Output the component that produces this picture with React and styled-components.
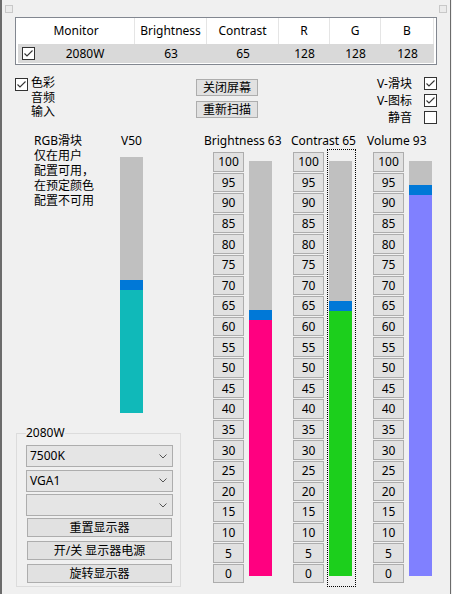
import React from "react";
import styled, { createGlobalStyle } from "styled-components";

const GlobalStyle = createGlobalStyle`
  html, body {
    margin: 0;
    padding: 0;
    background: #f0f0f0;
  }
  body {
    font-family: "Noto Sans", "Noto Sans CJK SC", sans-serif;
    font-size: 12px;
    color: #000;
  }
`;

const Window = styled.div`
  width: 451px;
  height: 594px;
  box-sizing: border-box;
  border-left: 2px solid #6b6b6b;
  border-right: 1px solid #6b6b6b;
  background: #f0f0f0;
  display: flex;
  flex-direction: column;
  overflow: hidden;
`;

const TitleStrip = styled.div`
  height: 17px;
  box-sizing: border-box;
  padding: 5px 3px 0 3px;
  display: flex;
  justify-content: space-between;
  align-items: flex-start;
`;

const TinyBox = styled.div`
  width: 8px;
  height: 8px;
  box-sizing: border-box;
  border: 1px solid #c8c8c8;
  background: #ebebeb;
`;

const Table = styled.div`
  margin: 0 13px;
  height: 48px;
  box-sizing: border-box;
  border: 1px solid #828790;
  background: #fff;
  padding: 0 2px 1px 2px;
`;

const Row = styled.div`
  display: grid;
  grid-template-columns: 117px 72px 72px 51px 51px 53px;
  height: ${(p) => (p.$header ? 26 : 19)}px;
  line-height: ${(p) => (p.$header ? 26 : 19)}px;
  background: ${(p) => (p.$selected ? "#d9d9d9" : "#fff")};
`;

const Cell = styled.div`
  text-align: center;
  white-space: nowrap;
  border-right: ${(p) => (p.$header ? "1px solid #e5e5e5" : "none")};
`;

const MonitorCell = styled.div`
  display: flex;
  align-items: center;
  padding-left: 4px;
  span {
    flex: 1;
    text-align: center;
  }
`;

const Box = styled.div`
  width: 13px;
  height: 13px;
  box-sizing: border-box;
  border: 1px solid #333;
  background: #fff;
  flex-shrink: 0;
  display: flex;
  align-items: center;
  justify-content: center;
`;

function CheckBox({ checked }) {
  return (
    <Box>
      {checked && (
        <svg width="11" height="11" viewBox="0 0 11 11">
          <path d="M1.5 5.5 L4 8 L9.5 2.5" fill="none" stroke="#333" strokeWidth="1.1" />
        </svg>
      )}
    </Box>
  );
}

const ControlsRow = styled.div`
  margin-top: 12px;
  height: 47px;
  display: flex;
  padding: 0 13px;
`;

const LeftControls = styled.div`
  width: 181px;
  display: flex;
  align-items: flex-start;
  gap: 3px;
  padding-top: 1px;
`;

const OptionList = styled.div`
  line-height: 14.5px;
  margin-top: -2px;
`;

const MiddleControls = styled.div`
  display: flex;
  flex-direction: column;
  gap: 5px;
  padding-top: 2px;
`;

const Button = styled.button`
  width: ${(p) => p.$width}px;
  height: ${(p) => p.$height}px;
  margin: 0;
  padding: 0;
  box-sizing: border-box;
  border: 1px solid #adadad;
  background: #e1e1e1;
  font: inherit;
  color: #000;
  line-height: ${(p) => p.$height - 2}px;
  text-align: center;
  white-space: nowrap;
`;

const RightControls = styled.div`
  margin-left: auto;
  display: flex;
  flex-direction: column;
  align-items: flex-end;
  gap: 4px;
`;

const ToggleRow = styled.div`
  display: flex;
  align-items: center;
  gap: 12px;
  height: 13px;
  line-height: 13px;
`;

const MainArea = styled.div`
  margin-top: 8px;
  display: flex;
  gap: 17px;
`;

const LeftPane = styled.div`
  width: 194px;
  display: flex;
  flex-direction: column;
`;

const TopSection = styled.div`
  height: 301px;
  display: flex;
`;

const Note = styled.div`
  margin-left: 32px;
  width: 86px;
  line-height: 15px;
  padding-top: 1px;
`;

const VCol = styled.div`
  width: 23px;
  display: flex;
  flex-direction: column;
  align-items: center;
`;

const ColLabel = styled.div`
  height: 17px;
  line-height: 17px;
  white-space: nowrap;
  margin-left: ${(p) => p.$shift || 0}px;
`;

const Bar = styled.div`
  width: 23px;
  height: ${(p) => p.$height}px;
  margin-top: ${(p) => p.$top || 0}px;
  background: #c0c0c0;
  display: flex;
  flex-direction: column;
  flex-shrink: 0;
`;

const Thumb = styled.div`
  height: 10px;
  background: #0078d7;
  flex-shrink: 0;
`;

const Fill = styled.div`
  flex: 1;
  background: ${(p) => p.$color};
`;

function LevelBar({ value, height, color, top }) {
  const gap = (1 - value / 100) * height - 5;
  return (
    <Bar $height={height} $top={top}>
      <div style={{ height: gap, flexShrink: 0 }} />
      <Thumb />
      <Fill $color={color} />
    </Bar>
  );
}

const Group = styled.div`
  position: relative;
  margin-left: 14px;
  width: 165px;
  height: 154px;
  box-sizing: border-box;
  border: 1px solid #dcdcdc;
  padding: 11px 7px 0 9px;
  display: flex;
  flex-direction: column;
`;

const Legend = styled.span`
  position: absolute;
  top: -8px;
  left: 9px;
  line-height: 14px;
  background: #f0f0f0;
`;

const ComboStack = styled.div`
  display: flex;
  flex-direction: column;
  gap: 2.5px;
`;

const Combo = styled.div`
  height: 22px;
  box-sizing: border-box;
  border: 1px solid #adadad;
  background: #e5e5e5;
  display: flex;
  align-items: center;
  justify-content: space-between;
  padding: 0 5px 0 3px;
  line-height: 20px;
`;

const GroupButtons = styled.div`
  margin-top: 2px;
  margin-left: 1px;
  display: flex;
  flex-direction: column;
  gap: 4px;
`;

const SliderColumn = styled.div`
  width: 63px;
  display: flex;
  flex-direction: column;
`;

const ColBody = styled.div`
  display: flex;
  gap: 3px;
  align-items: flex-start;
`;

const ButtonStack = styled.div`
  margin-top: 3px;
  width: 31px;
  display: flex;
  flex-direction: column;
  gap: 1px;
`;

const StepButton = styled(Button)`
  height: 19.6px;
  line-height: 17px;
`;

const BarFrame = styled.div`
  border: 1px dotted ${(p) => (p.$focused ? "#000" : "transparent")};
  padding: 11px 3px 10px 1px;
`;

const steps = [100, 95, 90, 85, 80, 75, 70, 65, 60, 55, 50, 45, 40, 35, 30, 25, 20, 15, 10, 5, 0];

const sliders = [
  { label: "Brightness 63", value: 63, color: "#ff0080", shift: -9 },
  { label: "Contrast 65", value: 65, color: "#1ccf1c", shift: -2, focused: true },
  { label: "Volume 93", value: 93, color: "#8080ff", shift: -6 },
];

function Chevron() {
  return (
    <svg width="8" height="5" viewBox="0 0 8 5">
      <path d="M0.5 0.5 L4 4 L7.5 0.5" fill="none" stroke="#555" strokeWidth="1" />
    </svg>
  );
}

export default function App() {
  return (
    <>
      <GlobalStyle />
      <Window>
        <TitleStrip>
          <TinyBox />
          <TinyBox />
        </TitleStrip>

        <Table>
          <Row $header>
            {["Monitor", "Brightness", "Contrast", "R", "G", "B"].map((h) => (
              <Cell $header key={h}>{h}</Cell>
            ))}
          </Row>
          <Row $selected>
            <MonitorCell>
              <CheckBox checked />
              <span>2080W</span>
            </MonitorCell>
            <Cell>63</Cell>
            <Cell>65</Cell>
            <Cell>128</Cell>
            <Cell>128</Cell>
            <Cell>128</Cell>
          </Row>
        </Table>

        <ControlsRow>
          <LeftControls>
            <CheckBox checked />
            <OptionList>
              <div>色彩</div>
              <div>音频</div>
              <div>输入</div>
            </OptionList>
          </LeftControls>
          <MiddleControls>
            <Button $width={62} $height={17}>关闭屏幕</Button>
            <Button $width={62} $height={17}>重新扫描</Button>
          </MiddleControls>
          <RightControls>
            <ToggleRow>
              V-滑块 <CheckBox checked />
            </ToggleRow>
            <ToggleRow>
              V-图标 <CheckBox checked />
            </ToggleRow>
            <ToggleRow>
              静音 <CheckBox />
            </ToggleRow>
          </RightControls>
        </ControlsRow>

        <MainArea>
          <LeftPane>
            <TopSection>
              <Note>
                <div>RGB滑块</div>
                <div>仅在用户</div>
                <div>配置可用，</div>
                <div>在预定颜色</div>
                <div>配置不可用</div>
              </Note>
              <VCol>
                <ColLabel>V50</ColLabel>
                <LevelBar value={50} height={256} color="#10b9b9" top={8} />
              </VCol>
            </TopSection>
            <Group>
              <Legend>2080W</Legend>
              <ComboStack>
                <Combo>
                  <span>7500K</span>
                  <Chevron />
                </Combo>
                <Combo>
                  <span>VGA1</span>
                  <Chevron />
                </Combo>
                <Combo>
                  <span />
                  <Chevron />
                </Combo>
              </ComboStack>
              <GroupButtons>
                <Button $width={145} $height={19}>重置显示器</Button>
                <Button $width={145} $height={19}>开/关 显示器电源</Button>
                <Button $width={145} $height={19}>旋转显示器</Button>
              </GroupButtons>
            </Group>
          </LeftPane>

          {sliders.map((s) => (
            <SliderColumn key={s.label}>
              <ColLabel $shift={s.shift}>{s.label}</ColLabel>
              <ColBody>
                <ButtonStack>
                  {steps.map((n) => (
                    <StepButton key={n} $width={31} $height={19}>
                      {n}
                    </StepButton>
                  ))}
                </ButtonStack>
                <BarFrame $focused={s.focused}>
                  <LevelBar value={s.value} height={415} color={s.color} />
                </BarFrame>
              </ColBody>
            </SliderColumn>
          ))}
        </MainArea>
      </Window>
    </>
  );
}
